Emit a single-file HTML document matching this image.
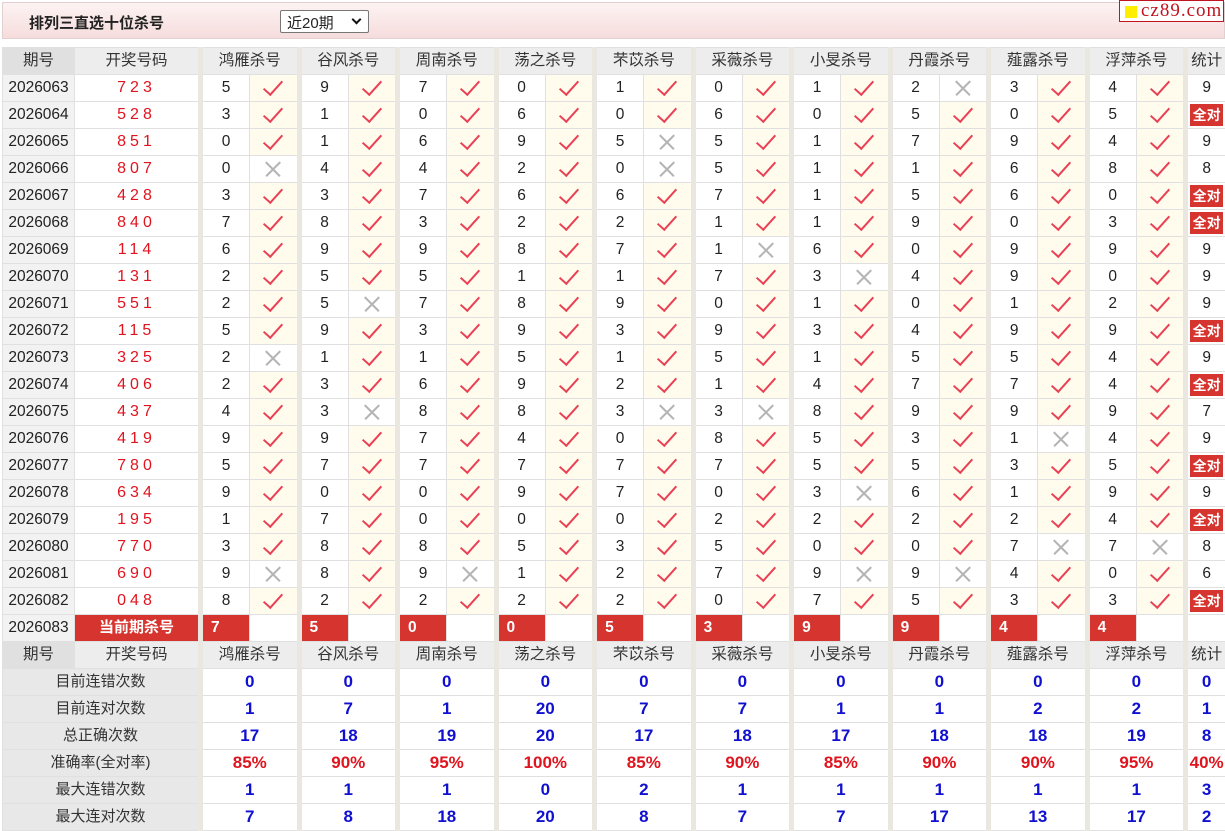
<!DOCTYPE html>
<html><head><meta charset="utf-8"><style>
*{margin:0;padding:0;box-sizing:border-box}
body{width:1225px;height:831px;overflow:hidden;background:#fff;font-family:"Liberation Sans","Noto Sans CJK SC",sans-serif;color:#222;position:relative}
.top{position:absolute;left:2px;top:2px;width:1223px;height:37px;background:linear-gradient(#fdf3f3,#f6dcdc);border:1px solid #e2d0d0}
.top h1{position:absolute;left:26px;top:9px;font-size:15px;font-weight:bold;color:#222}
.sel{position:absolute;left:277px;top:7px;width:89px;height:23px;border:1px solid #777;border-radius:2px;background:#fff;font-size:15px;padding:1px 0 0 6px}
.sel i{position:absolute;right:8px;top:5px;width:7px;height:7px;border:solid #111;border-width:0 2px 2px 0;transform:rotate(45deg)}
.logo{position:absolute;right:1px;top:0;width:105px;height:22px;border:1px solid #c0141e;background:#fff;font-family:"Liberation Serif",serif;font-size:19px;color:#c0141e;padding-left:21px;line-height:20px;letter-spacing:1px}
.logo b{position:absolute;left:5px;top:5px;width:12px;height:12px;background:#ffee00}
table{position:absolute;left:2px;top:47px;border-collapse:collapse;table-layout:fixed;width:1223px}
tr{height:27px}
td{height:26px;line-height:24px;border:1px solid #e0e0e0;text-align:center;font-size:15.5px;padding:0;overflow:hidden;white-space:nowrap}
tr.h td{background:#ededed;color:#333;font-size:15.5px}
tr.h td.p{background:#e0e0e0}
td.p{background:#f2f2f2}
td.c{color:#e0141e;letter-spacing:4px;font-size:16px}
td.g{border-left:5px solid #e9e7e0}
td.y,td.n{position:relative}
td.y{background:#fffcee}
td.y::after{content:"";position:absolute;left:50%;top:50%;width:8px;height:17px;border:solid #ea4054;border-width:0 2px 2px 0;transform:translate(-50%,-62%) rotate(42deg)}
td.n::before,td.n::after{content:"";position:absolute;left:50%;top:50%;width:20px;height:1.5px;background:#b4b4b4;transform:translate(-50%,-50%) rotate(45deg)}
td.n::after{transform:translate(-50%,-50%) rotate(-45deg)}
td.a{padding:2px}
td.a span{display:block;background:#d5342f;color:#fff;font-weight:bold;font-size:14px;height:22px;line-height:22px}
tr.cur td.k{background:#d5342f;color:#fff;font-weight:bold;text-align:left;padding-left:8px}
tr.cur td.t{background:#d5342f;color:#fff;font-weight:bold;font-size:15px}
tr.s td{font-weight:bold;color:#1010d0;font-size:17px}
tr.s td.l{background:#e8e8e8;color:#333;font-weight:normal;font-size:15px}
tr.s td.r{color:#e0141e}
</style></head><body>
<div class="top"><h1>排列三直选十位杀号</h1><div class="sel">近20期<i></i></div></div>
<div class="logo"><b></b>cz89.com</div>
<table>
<colgroup><col style="width:72px"><col style="width:126px">
<col style="width:49px"><col style="width:49.5px"><col style="width:49px"><col style="width:49.5px"><col style="width:49px"><col style="width:49.5px"><col style="width:49px"><col style="width:49.5px"><col style="width:49px"><col style="width:49.5px"><col style="width:49px"><col style="width:49.5px"><col style="width:49px"><col style="width:49.5px"><col style="width:49px"><col style="width:49.5px"><col style="width:49px"><col style="width:49.5px"><col style="width:49px"><col style="width:49.5px">
<col style="width:40px"></colgroup>
<tr class="h"><td class="p">期号</td><td>开奖号码</td><td class="g" colspan="2">鸿雁杀号</td><td class="g" colspan="2">谷风杀号</td><td class="g" colspan="2">周南杀号</td><td class="g" colspan="2">荡之杀号</td><td class="g" colspan="2">芣苡杀号</td><td class="g" colspan="2">采薇杀号</td><td class="g" colspan="2">小旻杀号</td><td class="g" colspan="2">丹霞杀号</td><td class="g" colspan="2">薤露杀号</td><td class="g" colspan="2">浮萍杀号</td><td class="g">统计</td></tr>
<tr><td class="p">2026063</td><td class="c">723</td><td class="g">5</td><td class="y"></td><td class="g">9</td><td class="y"></td><td class="g">7</td><td class="y"></td><td class="g">0</td><td class="y"></td><td class="g">1</td><td class="y"></td><td class="g">0</td><td class="y"></td><td class="g">1</td><td class="y"></td><td class="g">2</td><td class="n"></td><td class="g">3</td><td class="y"></td><td class="g">4</td><td class="y"></td><td class="g">9</td></tr>
<tr><td class="p">2026064</td><td class="c">528</td><td class="g">3</td><td class="y"></td><td class="g">1</td><td class="y"></td><td class="g">0</td><td class="y"></td><td class="g">6</td><td class="y"></td><td class="g">0</td><td class="y"></td><td class="g">6</td><td class="y"></td><td class="g">0</td><td class="y"></td><td class="g">5</td><td class="y"></td><td class="g">0</td><td class="y"></td><td class="g">5</td><td class="y"></td><td class="g a"><span>全对</span></td></tr>
<tr><td class="p">2026065</td><td class="c">851</td><td class="g">0</td><td class="y"></td><td class="g">1</td><td class="y"></td><td class="g">6</td><td class="y"></td><td class="g">9</td><td class="y"></td><td class="g">5</td><td class="n"></td><td class="g">5</td><td class="y"></td><td class="g">1</td><td class="y"></td><td class="g">7</td><td class="y"></td><td class="g">9</td><td class="y"></td><td class="g">4</td><td class="y"></td><td class="g">9</td></tr>
<tr><td class="p">2026066</td><td class="c">807</td><td class="g">0</td><td class="n"></td><td class="g">4</td><td class="y"></td><td class="g">4</td><td class="y"></td><td class="g">2</td><td class="y"></td><td class="g">0</td><td class="n"></td><td class="g">5</td><td class="y"></td><td class="g">1</td><td class="y"></td><td class="g">1</td><td class="y"></td><td class="g">6</td><td class="y"></td><td class="g">8</td><td class="y"></td><td class="g">8</td></tr>
<tr><td class="p">2026067</td><td class="c">428</td><td class="g">3</td><td class="y"></td><td class="g">3</td><td class="y"></td><td class="g">7</td><td class="y"></td><td class="g">6</td><td class="y"></td><td class="g">6</td><td class="y"></td><td class="g">7</td><td class="y"></td><td class="g">1</td><td class="y"></td><td class="g">5</td><td class="y"></td><td class="g">6</td><td class="y"></td><td class="g">0</td><td class="y"></td><td class="g a"><span>全对</span></td></tr>
<tr><td class="p">2026068</td><td class="c">840</td><td class="g">7</td><td class="y"></td><td class="g">8</td><td class="y"></td><td class="g">3</td><td class="y"></td><td class="g">2</td><td class="y"></td><td class="g">2</td><td class="y"></td><td class="g">1</td><td class="y"></td><td class="g">1</td><td class="y"></td><td class="g">9</td><td class="y"></td><td class="g">0</td><td class="y"></td><td class="g">3</td><td class="y"></td><td class="g a"><span>全对</span></td></tr>
<tr><td class="p">2026069</td><td class="c">114</td><td class="g">6</td><td class="y"></td><td class="g">9</td><td class="y"></td><td class="g">9</td><td class="y"></td><td class="g">8</td><td class="y"></td><td class="g">7</td><td class="y"></td><td class="g">1</td><td class="n"></td><td class="g">6</td><td class="y"></td><td class="g">0</td><td class="y"></td><td class="g">9</td><td class="y"></td><td class="g">9</td><td class="y"></td><td class="g">9</td></tr>
<tr><td class="p">2026070</td><td class="c">131</td><td class="g">2</td><td class="y"></td><td class="g">5</td><td class="y"></td><td class="g">5</td><td class="y"></td><td class="g">1</td><td class="y"></td><td class="g">1</td><td class="y"></td><td class="g">7</td><td class="y"></td><td class="g">3</td><td class="n"></td><td class="g">4</td><td class="y"></td><td class="g">9</td><td class="y"></td><td class="g">0</td><td class="y"></td><td class="g">9</td></tr>
<tr><td class="p">2026071</td><td class="c">551</td><td class="g">2</td><td class="y"></td><td class="g">5</td><td class="n"></td><td class="g">7</td><td class="y"></td><td class="g">8</td><td class="y"></td><td class="g">9</td><td class="y"></td><td class="g">0</td><td class="y"></td><td class="g">1</td><td class="y"></td><td class="g">0</td><td class="y"></td><td class="g">1</td><td class="y"></td><td class="g">2</td><td class="y"></td><td class="g">9</td></tr>
<tr><td class="p">2026072</td><td class="c">115</td><td class="g">5</td><td class="y"></td><td class="g">9</td><td class="y"></td><td class="g">3</td><td class="y"></td><td class="g">9</td><td class="y"></td><td class="g">3</td><td class="y"></td><td class="g">9</td><td class="y"></td><td class="g">3</td><td class="y"></td><td class="g">4</td><td class="y"></td><td class="g">9</td><td class="y"></td><td class="g">9</td><td class="y"></td><td class="g a"><span>全对</span></td></tr>
<tr><td class="p">2026073</td><td class="c">325</td><td class="g">2</td><td class="n"></td><td class="g">1</td><td class="y"></td><td class="g">1</td><td class="y"></td><td class="g">5</td><td class="y"></td><td class="g">1</td><td class="y"></td><td class="g">5</td><td class="y"></td><td class="g">1</td><td class="y"></td><td class="g">5</td><td class="y"></td><td class="g">5</td><td class="y"></td><td class="g">4</td><td class="y"></td><td class="g">9</td></tr>
<tr><td class="p">2026074</td><td class="c">406</td><td class="g">2</td><td class="y"></td><td class="g">3</td><td class="y"></td><td class="g">6</td><td class="y"></td><td class="g">9</td><td class="y"></td><td class="g">2</td><td class="y"></td><td class="g">1</td><td class="y"></td><td class="g">4</td><td class="y"></td><td class="g">7</td><td class="y"></td><td class="g">7</td><td class="y"></td><td class="g">4</td><td class="y"></td><td class="g a"><span>全对</span></td></tr>
<tr><td class="p">2026075</td><td class="c">437</td><td class="g">4</td><td class="y"></td><td class="g">3</td><td class="n"></td><td class="g">8</td><td class="y"></td><td class="g">8</td><td class="y"></td><td class="g">3</td><td class="n"></td><td class="g">3</td><td class="n"></td><td class="g">8</td><td class="y"></td><td class="g">9</td><td class="y"></td><td class="g">9</td><td class="y"></td><td class="g">9</td><td class="y"></td><td class="g">7</td></tr>
<tr><td class="p">2026076</td><td class="c">419</td><td class="g">9</td><td class="y"></td><td class="g">9</td><td class="y"></td><td class="g">7</td><td class="y"></td><td class="g">4</td><td class="y"></td><td class="g">0</td><td class="y"></td><td class="g">8</td><td class="y"></td><td class="g">5</td><td class="y"></td><td class="g">3</td><td class="y"></td><td class="g">1</td><td class="n"></td><td class="g">4</td><td class="y"></td><td class="g">9</td></tr>
<tr><td class="p">2026077</td><td class="c">780</td><td class="g">5</td><td class="y"></td><td class="g">7</td><td class="y"></td><td class="g">7</td><td class="y"></td><td class="g">7</td><td class="y"></td><td class="g">7</td><td class="y"></td><td class="g">7</td><td class="y"></td><td class="g">5</td><td class="y"></td><td class="g">5</td><td class="y"></td><td class="g">3</td><td class="y"></td><td class="g">5</td><td class="y"></td><td class="g a"><span>全对</span></td></tr>
<tr><td class="p">2026078</td><td class="c">634</td><td class="g">9</td><td class="y"></td><td class="g">0</td><td class="y"></td><td class="g">0</td><td class="y"></td><td class="g">9</td><td class="y"></td><td class="g">7</td><td class="y"></td><td class="g">0</td><td class="y"></td><td class="g">3</td><td class="n"></td><td class="g">6</td><td class="y"></td><td class="g">1</td><td class="y"></td><td class="g">9</td><td class="y"></td><td class="g">9</td></tr>
<tr><td class="p">2026079</td><td class="c">195</td><td class="g">1</td><td class="y"></td><td class="g">7</td><td class="y"></td><td class="g">0</td><td class="y"></td><td class="g">0</td><td class="y"></td><td class="g">0</td><td class="y"></td><td class="g">2</td><td class="y"></td><td class="g">2</td><td class="y"></td><td class="g">2</td><td class="y"></td><td class="g">2</td><td class="y"></td><td class="g">4</td><td class="y"></td><td class="g a"><span>全对</span></td></tr>
<tr><td class="p">2026080</td><td class="c">770</td><td class="g">3</td><td class="y"></td><td class="g">8</td><td class="y"></td><td class="g">8</td><td class="y"></td><td class="g">5</td><td class="y"></td><td class="g">3</td><td class="y"></td><td class="g">5</td><td class="y"></td><td class="g">0</td><td class="y"></td><td class="g">0</td><td class="y"></td><td class="g">7</td><td class="n"></td><td class="g">7</td><td class="n"></td><td class="g">8</td></tr>
<tr><td class="p">2026081</td><td class="c">690</td><td class="g">9</td><td class="n"></td><td class="g">8</td><td class="y"></td><td class="g">9</td><td class="n"></td><td class="g">1</td><td class="y"></td><td class="g">2</td><td class="y"></td><td class="g">7</td><td class="y"></td><td class="g">9</td><td class="n"></td><td class="g">9</td><td class="n"></td><td class="g">4</td><td class="y"></td><td class="g">0</td><td class="y"></td><td class="g">6</td></tr>
<tr><td class="p">2026082</td><td class="c">048</td><td class="g">8</td><td class="y"></td><td class="g">2</td><td class="y"></td><td class="g">2</td><td class="y"></td><td class="g">2</td><td class="y"></td><td class="g">2</td><td class="y"></td><td class="g">0</td><td class="y"></td><td class="g">7</td><td class="y"></td><td class="g">5</td><td class="y"></td><td class="g">3</td><td class="y"></td><td class="g">3</td><td class="y"></td><td class="g a"><span>全对</span></td></tr>
<tr class="cur"><td class="p">2026083</td><td class="t">当前期杀号</td><td class="g k">7</td><td></td><td class="g k">5</td><td></td><td class="g k">0</td><td></td><td class="g k">0</td><td></td><td class="g k">5</td><td></td><td class="g k">3</td><td></td><td class="g k">9</td><td></td><td class="g k">9</td><td></td><td class="g k">4</td><td></td><td class="g k">4</td><td></td><td class="g"></td></tr>
<tr class="h"><td class="p">期号</td><td>开奖号码</td><td class="g" colspan="2">鸿雁杀号</td><td class="g" colspan="2">谷风杀号</td><td class="g" colspan="2">周南杀号</td><td class="g" colspan="2">荡之杀号</td><td class="g" colspan="2">芣苡杀号</td><td class="g" colspan="2">采薇杀号</td><td class="g" colspan="2">小旻杀号</td><td class="g" colspan="2">丹霞杀号</td><td class="g" colspan="2">薤露杀号</td><td class="g" colspan="2">浮萍杀号</td><td class="g">统计</td></tr>
<tr class="s"><td class="l" colspan="2">目前连错次数</td><td class="g" colspan="2">0</td><td class="g" colspan="2">0</td><td class="g" colspan="2">0</td><td class="g" colspan="2">0</td><td class="g" colspan="2">0</td><td class="g" colspan="2">0</td><td class="g" colspan="2">0</td><td class="g" colspan="2">0</td><td class="g" colspan="2">0</td><td class="g" colspan="2">0</td><td class="g">0</td></tr>
<tr class="s"><td class="l" colspan="2">目前连对次数</td><td class="g" colspan="2">1</td><td class="g" colspan="2">7</td><td class="g" colspan="2">1</td><td class="g" colspan="2">20</td><td class="g" colspan="2">7</td><td class="g" colspan="2">7</td><td class="g" colspan="2">1</td><td class="g" colspan="2">1</td><td class="g" colspan="2">2</td><td class="g" colspan="2">2</td><td class="g">1</td></tr>
<tr class="s"><td class="l" colspan="2">总正确次数</td><td class="g" colspan="2">17</td><td class="g" colspan="2">18</td><td class="g" colspan="2">19</td><td class="g" colspan="2">20</td><td class="g" colspan="2">17</td><td class="g" colspan="2">18</td><td class="g" colspan="2">17</td><td class="g" colspan="2">18</td><td class="g" colspan="2">18</td><td class="g" colspan="2">19</td><td class="g">8</td></tr>
<tr class="s"><td class="l" colspan="2">准确率(全对率)</td><td class="g r" colspan="2">85%</td><td class="g r" colspan="2">90%</td><td class="g r" colspan="2">95%</td><td class="g r" colspan="2">100%</td><td class="g r" colspan="2">85%</td><td class="g r" colspan="2">90%</td><td class="g r" colspan="2">85%</td><td class="g r" colspan="2">90%</td><td class="g r" colspan="2">90%</td><td class="g r" colspan="2">95%</td><td class="g r">40%</td></tr>
<tr class="s"><td class="l" colspan="2">最大连错次数</td><td class="g" colspan="2">1</td><td class="g" colspan="2">1</td><td class="g" colspan="2">1</td><td class="g" colspan="2">0</td><td class="g" colspan="2">2</td><td class="g" colspan="2">1</td><td class="g" colspan="2">1</td><td class="g" colspan="2">1</td><td class="g" colspan="2">1</td><td class="g" colspan="2">1</td><td class="g">3</td></tr>
<tr class="s"><td class="l" colspan="2">最大连对次数</td><td class="g" colspan="2">7</td><td class="g" colspan="2">8</td><td class="g" colspan="2">18</td><td class="g" colspan="2">20</td><td class="g" colspan="2">8</td><td class="g" colspan="2">7</td><td class="g" colspan="2">7</td><td class="g" colspan="2">17</td><td class="g" colspan="2">13</td><td class="g" colspan="2">17</td><td class="g">2</td></tr>
</table>
</body></html>
